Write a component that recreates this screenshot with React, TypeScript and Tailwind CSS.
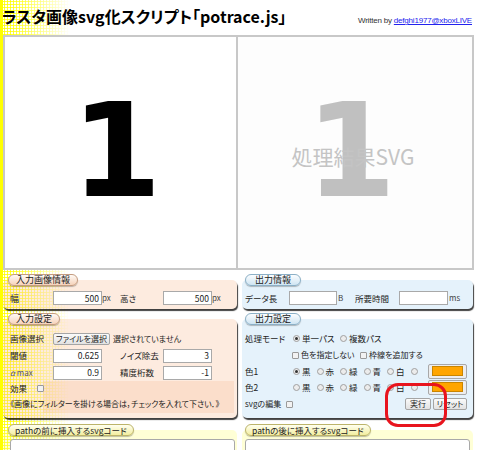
import React from "react";

const jp = "font-['Noto_Sans_CJK_JP',sans-serif] [font-feature-settings:'palt']";

function Radio({ checked = false }: { checked?: boolean }) {
  return (
    <span className="inline-flex items-center justify-center w-[7px] h-[7px] rounded-full border border-[#a0a0a0] bg-[#ececec] shrink-0">
      {checked && <span className="w-[3px] h-[3px] rounded-full bg-[#333]" />}
    </span>
  );
}

function Check() {
  return <span className="inline-block w-[7px] h-[7px] border border-[#9a9a9a] bg-[#f2f2f2] rounded-[1px] shrink-0" />;
}

function Input({ value = "", w }: { value?: string; w: string }) {
  return (
    <div className={`${w} h-[14px] bg-white border border-[#a9a9a9] flex items-center justify-end pr-[2px] text-[8.5px] leading-none text-[#222] shrink-0`}>
      {value}
    </div>
  );
}

function Swatch() {
  return (
    <div className="w-[39px] h-[15px] border border-[#a8a8a8] bg-[#ededed] rounded-[2px] flex items-center justify-center shrink-0">
      <div className="w-[31px] h-[10px] bg-[#ffa500] border border-[#c98500]" />
    </div>
  );
}

function Btn({ children, w }: { children: React.ReactNode; w: string }) {
  return (
    <div className={`${w} h-[12px] border border-[#a5a5a5] bg-[linear-gradient(#fafafa,#e2e2e2)] rounded-[2px] flex items-center justify-center text-[8px] leading-none text-[#222] whitespace-nowrap shrink-0`}>
      {children}
    </div>
  );
}

export default function App() {
  return (
    <div className={`relative w-[480px] h-[450px] overflow-hidden bg-white text-[#222] ${jp}`}>
      {/* yellow halftone background on the left */}
      <div className="absolute left-0 top-0 h-full w-[70px] [background-image:radial-gradient(circle,#ffff00_0.9px,transparent_1.4px)] [background-size:3px_3px] [mask-image:linear-gradient(to_right,#000_0%,#000_15%,transparent_100%)]" />
      <div className="absolute left-0 top-0 h-full w-[3px] bg-[#ffff00]" />

      <div className="relative whitespace-nowrap">
        {/* header */}
        <div className="h-[35px] flex items-start justify-between">
          <h1 className="pl-[2px] pt-[6px] text-[16px] leading-[20px] font-bold text-black">
            ラスタ画像svg化スクリプト「potrace.js」
          </h1>
          <div className="pt-[16px] pr-[8px] text-[8px] leading-[10px] font-['Liberation_Sans',sans-serif] text-[#333] tracking-[-0.2px]">
            Written by <span className="text-[#2222ee] underline">defghi1977@xboxLIVE</span>
          </div>
        </div>

        {/* image boxes */}
        <div className="ml-[3px] grid grid-cols-[235px_236px] h-[235px]">
          <div className="border-2 border-[#c8c8c8] bg-white flex items-center justify-center">
            <span className="font-['DejaVu_Sans',sans-serif] font-bold text-[130px] leading-none text-black -translate-x-[4px] -translate-y-[2px]">1</span>
          </div>
          <div className="border-2 border-l-0 border-[#c8c8c8] bg-[#fdfdfd] grid place-items-center">
            <span className="col-start-1 row-start-1 font-['DejaVu_Sans',sans-serif] font-bold text-[130px] leading-none text-[#c0c0c0] -translate-x-[4px] -translate-y-[2px]">1</span>
            <span className="col-start-1 row-start-1 text-[21px] leading-none text-[#c4c4c4] translate-y-[4px] -translate-x-[2px] [font-feature-settings:normal]">処理結果SVG</span>
          </div>
        </div>

        {/* lower panels */}
        <div className="flex mt-[4px]">
          {/* left column */}
          <div className="ml-[3px] w-[234px] flex flex-col">
            <div className="flex flex-col">
              <div className="relative z-10 self-start ml-[5px] h-[12px] px-[7px] rounded-full border border-[#c49c80] bg-[linear-gradient(#fffaf5,#f6d3bb)] text-[9px] leading-[10px] shadow-[0_1px_1px_rgba(0,0,0,0.25)]">入力画像情報</div>
              <div className="-mt-[6px] pt-[11px] pb-[4px] pl-[7px] rounded-[5px] bg-[rgba(250,190,150,0.3)] shadow-[1px_2px_1px_rgba(0,0,0,0.75)]">
                <div className="flex items-center h-[14px] text-[8px] leading-none">
                  <span className="w-[43px] text-[9px]">幅</span>
                  <Input w="w-[49px]" value="500" />
                  <span className="w-[18px] text-[8px] text-[#444]">px</span>
                  <span className="w-[43px] text-[8.5px]">高さ</span>
                  <Input w="w-[49px]" value="500" />
                  <span className="text-[8px] text-[#444]">px</span>
                </div>
              </div>
            </div>

            <div className="flex flex-col mt-[4px]">
              <div className="relative z-10 self-start ml-[5px] h-[12px] px-[7px] rounded-full border border-[#c49c80] bg-[linear-gradient(#fffaf5,#f6d3bb)] text-[9px] leading-[10px] shadow-[0_1px_1px_rgba(0,0,0,0.25)]">入力設定</div>
              <div className="-mt-[6px] pt-[11px] pb-[7px] pl-[7px] pr-[3px] rounded-[5px] bg-[rgba(250,190,150,0.3)] shadow-[1px_2px_1px_rgba(0,0,0,0.75)] text-[8.5px] leading-none">
                <div className="flex items-center h-[17px]">
                  <span className="w-[43px]">画像選択</span>
                  <Btn w="w-[57px]">ファイルを選択</Btn>
                  <span className="ml-[3px] text-[8px]">選択されていません</span>
                </div>
                <div className="flex items-center h-[17px]">
                  <span className="w-[43px]">閾値</span>
                  <Input w="w-[49px]" value="0.625" />
                  <span className="w-[18px]" />
                  <span className="w-[43px]">ノイズ除去</span>
                  <Input w="w-[49px]" value="3" />
                </div>
                <div className="flex items-center h-[17px]">
                  <span className="w-[43px] text-[8px] text-[#555]"><i>α</i> max</span>
                  <Input w="w-[49px]" value="0.9" />
                  <span className="w-[18px]" />
                  <span className="w-[43px]">精度桁数</span>
                  <Input w="w-[49px]" value="-1" />
                </div>
                <div className="grid grid-cols-[33px_1fr] grid-rows-[15px_15px]">
                  <div className="col-start-2 row-start-1 row-span-2 bg-[rgba(245,165,115,0.18)] -mb-[2px]" />
                  <div className="col-start-1 col-span-2 row-start-1 flex items-center">
                    <span className="w-[27px]">効果</span>
                    <Check />
                  </div>
                  <div className="col-start-1 col-span-2 row-start-2 flex items-center text-[8px]">
                    《画像にフィルターを掛ける場合は，チェックを入れて下さい．》
                  </div>
                </div>
              </div>
            </div>

            <div className="flex flex-col mt-[6px]">
              <div className="relative z-10 self-start ml-[5px] h-[12px] px-[6px] rounded-full border border-[#bcb46a] bg-[linear-gradient(#fffff0,#f3eea0)] text-[8.5px] leading-[10px] shadow-[0_1px_1px_rgba(0,0,0,0.25)]">pathの前に挿入するsvgコード</div>
              <div className="-mt-[6px] pt-[9px] pl-[7px] pr-[2px] h-[40px] rounded-[5px] bg-[rgba(255,255,120,0.3)]">
                <div className="h-[40px] bg-white border border-[#a9a9a9] rounded-[3px]" />
              </div>
            </div>
          </div>

          {/* right column */}
          <div className="ml-[5px] w-[231px] flex flex-col">
            <div className="flex flex-col">
              <div className="relative z-10 self-start ml-[3px] h-[12px] px-[9px] rounded-full border border-[#8cb0c6] bg-[linear-gradient(#fbfdff,#cfe5f3)] text-[9px] leading-[10px] shadow-[0_1px_1px_rgba(0,0,0,0.25)]">出力情報</div>
              <div className="-mt-[6px] pt-[11px] pb-[4px] pl-[3px] rounded-[5px] bg-[rgba(160,210,240,0.28)] shadow-[1px_2px_1px_rgba(0,0,0,0.75)]">
                <div className="flex items-center h-[14px] text-[8.5px] leading-none">
                  <span className="w-[44px]">データ長</span>
                  <Input w="w-[48px]" />
                  <span className="w-[18px] pl-[1px] text-[8px] text-[#444]">B</span>
                  <span className="w-[44px]">所要時間</span>
                  <Input w="w-[49px]" />
                  <span className="pl-[1px] text-[8px] text-[#444]">ms</span>
                </div>
              </div>
            </div>

            <div className="flex flex-col mt-[4px]">
              <div className="relative z-10 self-start ml-[3px] h-[12px] px-[9px] rounded-full border border-[#8cb0c6] bg-[linear-gradient(#fbfdff,#cfe5f3)] text-[9px] leading-[10px] shadow-[0_1px_1px_rgba(0,0,0,0.25)]">出力設定</div>
              <div className="-mt-[6px] pt-[11px] pb-[5px] pl-[3px] pr-[6px] rounded-[5px] bg-[rgba(160,210,240,0.28)] shadow-[1px_2px_1px_rgba(0,0,0,0.75)] text-[8.5px] leading-none">
                <div className="flex items-center h-[17px]">
                  <span className="w-[48px]">処理モード</span>
                  <span className="w-[47px] flex items-center gap-[2px]"><Radio checked />単一パス</span>
                  <span className="flex items-center gap-[2px]"><Radio />複数パス</span>
                </div>
                <div className="flex items-center h-[16px] text-[8px]">
                  <span className="w-[47px]" />
                  <span className="w-[68px] flex items-center gap-[2px]"><Check />色を指定しない</span>
                  <span className="flex items-center gap-[2px]"><Check />枠線を追加する</span>
                </div>
                <div className="flex items-center h-[16px]">
                  <span className="w-[48px]">色1</span>
                  <span className="w-[23.5px] flex items-center gap-[2px]"><Radio checked />黒</span>
                  <span className="w-[23.5px] flex items-center gap-[2px]"><Radio />赤</span>
                  <span className="w-[23.5px] flex items-center gap-[2px]"><Radio />緑</span>
                  <span className="w-[23.5px] flex items-center gap-[2px]"><Radio />青</span>
                  <span className="w-[23.5px] flex items-center gap-[2px]"><Radio />白</span>
                  <span className="flex items-center"><Radio /></span>
                  <span className="ml-auto"><Swatch /></span>
                </div>
                <div className="flex items-center h-[16px]">
                  <span className="w-[48px]">色2</span>
                  <span className="w-[23.5px] flex items-center gap-[2px]"><Radio />黒</span>
                  <span className="w-[23.5px] flex items-center gap-[2px]"><Radio />赤</span>
                  <span className="w-[23.5px] flex items-center gap-[2px]"><Radio />緑</span>
                  <span className="w-[23.5px] flex items-center gap-[2px]"><Radio />青</span>
                  <span className="w-[23.5px] flex items-center gap-[2px]"><Radio />白</span>
                  <span className="flex items-center"><Radio /></span>
                  <span className="ml-auto"><Swatch /></span>
                </div>
                <div className="flex items-center h-[18px]">
                  <span className="w-[41px] text-[8px]">svgの編集</span>
                  <Check />
                  <span className="ml-auto flex items-center gap-[2px]">
                    <Btn w="w-[26px]">実行</Btn>
                    <Btn w="w-[34px]">リセット</Btn>
                  </span>
                </div>
              </div>
            </div>

            <div className="flex flex-col mt-[6px]">
              <div className="relative z-10 self-start ml-[3px] h-[12px] px-[6px] rounded-full border border-[#bcb46a] bg-[linear-gradient(#fffff0,#f3eea0)] text-[8.5px] leading-[10px] shadow-[0_1px_1px_rgba(0,0,0,0.25)]">pathの後に挿入するsvgコード</div>
              <div className="-mt-[6px] pt-[9px] pl-[3px] pr-[3px] h-[40px] rounded-[5px] bg-[rgba(255,255,120,0.3)]">
                <div className="h-[40px] bg-white border border-[#a9a9a9] rounded-[3px]" />
              </div>
            </div>
          </div>
        </div>
      </div>

      {/* red annotation */}
      <div className="absolute left-[385px] top-[383px] w-[62px] h-[44px] border-[3px] border-[#e8141e] rounded-[13px]" />
    </div>
  );
}
